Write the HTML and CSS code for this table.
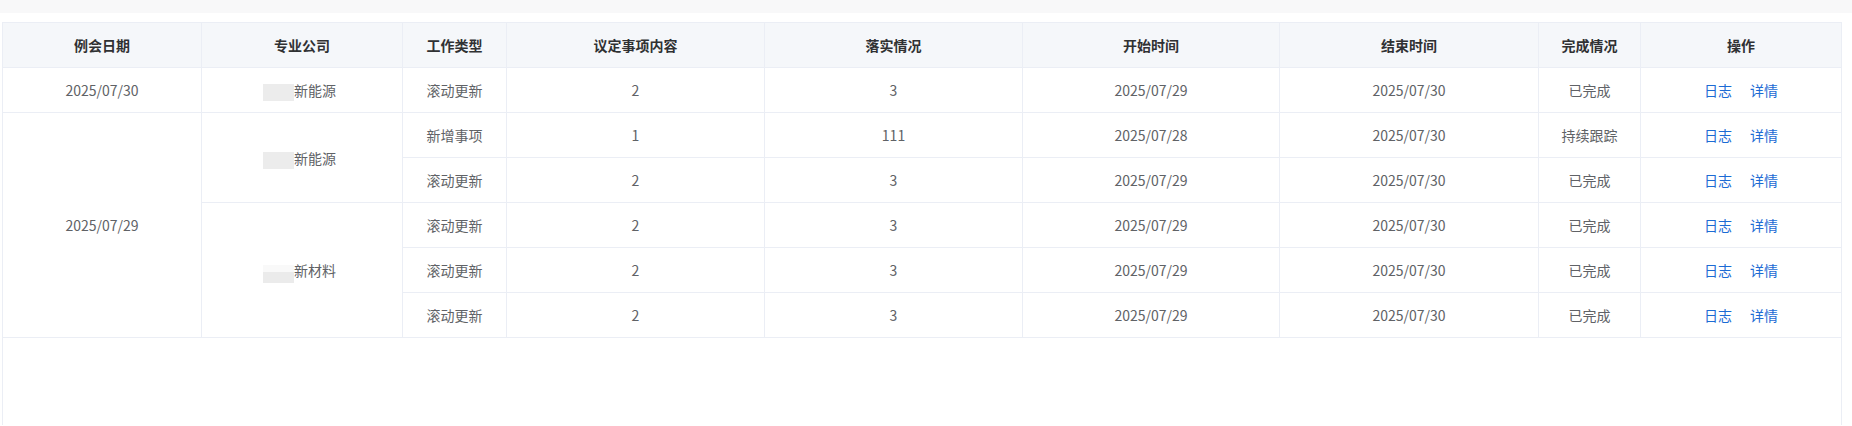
FILE: index.html
```html
<!DOCTYPE html>
<html lang="zh-CN">
<head>
    <meta charset="UTF-8">
    <title>例会事项</title>
    <link rel="stylesheet" href="styles.css">
</head>
<body>
    <div class="top-band"></div>
    <div class="page">
        <div class="table-wrap">
            <table class="meeting-table">
                <colgroup>
                    <col class="c-date">
                    <col class="c-company">
                    <col class="c-type">
                    <col class="c-content">
                    <col class="c-result">
                    <col class="c-start">
                    <col class="c-end">
                    <col class="c-status">
                    <col>
                </colgroup>
                <thead>
                    <tr>
                        <th>例会日期</th>
                        <th>专业公司</th>
                        <th>工作类型</th>
                        <th>议定事项内容</th>
                        <th>落实情况</th>
                        <th>开始时间</th>
                        <th>结束时间</th>
                        <th>完成情况</th>
                        <th>操作</th>
                    </tr>
                </thead>
                <tbody>
                    <tr>
                        <td>2025/07/30</td>
                        <td class="company"><span class="mask"></span>新能源</td>
                        <td>滚动更新</td>
                        <td>2</td>
                        <td>3</td>
                        <td>2025/07/29</td>
                        <td>2025/07/30</td>
                        <td>已完成</td>
                        <td class="ops"><a href="#">日志</a><a href="#">详情</a></td>
                    </tr>
                    <tr>
                        <td rowspan="5">2025/07/29</td>
                        <td rowspan="2" class="company"><span class="mask"></span>新能源</td>
                        <td>新增事项</td>
                        <td>1</td>
                        <td>111</td>
                        <td>2025/07/28</td>
                        <td>2025/07/30</td>
                        <td>持续跟踪</td>
                        <td class="ops"><a href="#">日志</a><a href="#">详情</a></td>
                    </tr>
                    <tr>
                        <td>滚动更新</td>
                        <td>2</td>
                        <td>3</td>
                        <td>2025/07/29</td>
                        <td>2025/07/30</td>
                        <td>已完成</td>
                        <td class="ops"><a href="#">日志</a><a href="#">详情</a></td>
                    </tr>
                    <tr>
                        <td rowspan="3" class="company"><span class="mask mask-low"></span>新材料</td>
                        <td>滚动更新</td>
                        <td>2</td>
                        <td>3</td>
                        <td>2025/07/29</td>
                        <td>2025/07/30</td>
                        <td>已完成</td>
                        <td class="ops"><a href="#">日志</a><a href="#">详情</a></td>
                    </tr>
                    <tr>
                        <td>滚动更新</td>
                        <td>2</td>
                        <td>3</td>
                        <td>2025/07/29</td>
                        <td>2025/07/30</td>
                        <td>已完成</td>
                        <td class="ops"><a href="#">日志</a><a href="#">详情</a></td>
                    </tr>
                    <tr>
                        <td>滚动更新</td>
                        <td>2</td>
                        <td>3</td>
                        <td>2025/07/29</td>
                        <td>2025/07/30</td>
                        <td>已完成</td>
                        <td class="ops"><a href="#">日志</a><a href="#">详情</a></td>
                    </tr>
                </tbody>
            </table>
        </div>
    </div>
</body>
</html>
```
FILE: styles.css
```css
html, body {
    margin: 0;
    padding: 0;
    height: 100%;
    overflow: hidden;
}
body {
    font-family: "Noto Sans CJK SC", "Noto Sans", sans-serif;
    font-size: 14px;
    color: #606266;
    background-color: #fff;
}
.top-band {
    height: 13px;
    background-color: #f8f8f9;
}
.page {
    padding: 9px 10px 0 2px;
}
.table-wrap {
    border: 1px solid #ebeef5;
    border-bottom: none;
    height: calc(100vh - 23px);
    box-sizing: border-box;
}
.meeting-table {
    width: 100%;
    table-layout: fixed;
    border-collapse: separate;
    border-spacing: 0;
}
.c-date { width: 199px; }
.c-company { width: 201px; }
.c-type { width: 104px; }
.c-content { width: 258px; }
.c-result { width: 258px; }
.c-start { width: 257px; }
.c-end { width: 259px; }
.c-status { width: 102px; }
.meeting-table th,
.meeting-table td {
    padding: 0;
    text-align: center;
    border-right: 1px solid #ebeef5;
    border-bottom: 1px solid #ebeef5;
    white-space: nowrap;
}
.meeting-table th:last-child,
.meeting-table td.ops {
    border-right: none;
}
.meeting-table th {
    height: 44px;
    line-height: 44px;
    background-color: #f5f7fa;
    color: #303133;
    font-weight: 700;
}
.meeting-table td {
    height: 44px;
    line-height: 44px;
}
.meeting-table td.company {
    padding-right: 5px;
}
.mask {
    display: inline-block;
    width: 31px;
    height: 17px;
    vertical-align: -5px;
    background-color: #ececec;
}
.mask-low {
    height: 18px;
    vertical-align: -7px;
    background: linear-gradient(#f9f9f9 38%, #ebebeb 38%);
}
.ops a {
    color: #1c6bd4;
    text-decoration: none;
    margin: 0 9px;
}
```
